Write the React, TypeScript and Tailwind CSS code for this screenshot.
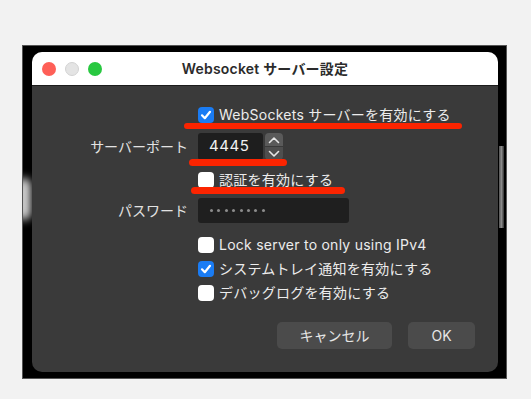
import React from "react";

const Check: React.FC<{ checked?: boolean }> = ({ checked }) => (
  <span
    className={
      "flex h-[16px] w-[16px] shrink-0 items-center justify-center rounded-[4px] " +
      (checked ? "bg-[#1a7cf4]" : "bg-white")
    }
  >
    {checked && (
      <svg width="12" height="12" viewBox="0 0 12 12">
        <path d="M2 6.3 L4.8 9.2 L10 2.8" fill="none" stroke="white" strokeWidth="2.2" strokeLinecap="round" strokeLinejoin="round" />
      </svg>
    )}
  </span>
);

const CheckRow: React.FC<{ checked?: boolean; label: string; className?: string }> = ({ checked, label, className }) => (
  <div className={"col-start-2 flex h-[16px] items-center gap-[5px] " + (className ?? "")}>
    <Check checked={checked} />
    <span className="text-[14px] leading-none tracking-[0.25px] text-[#ececec]">{label}</span>
  </div>
);

const App: React.FC = () => {
  return (
    <div className="min-h-screen w-full bg-[#f2f2f2] pl-[22px] pt-[45px] font-['Inter','Noto_Sans_CJK_JP',sans-serif]">
      <div className="relative h-[334px] w-[485px] overflow-hidden border border-[#555] bg-black pl-[9px] pt-[6px]">
        {/* reflections at the edges */}
        <div className="absolute left-[-6px] top-[132px] h-[42px] w-[14px] rounded-full bg-[#d8d8d8] blur-[4px]" />
        <div className="absolute left-[476px] top-[100px] h-[82px] w-[5px] bg-gradient-to-r from-[#555] via-[#8a8a8a] to-[#333] blur-[0.5px]" />

        <div className="relative flex h-[320px] w-[466px] flex-col overflow-hidden rounded-[10px] bg-[#3a3a3a]">
          {/* title bar */}
          <div className="grid h-[34px] grid-cols-[1fr_auto_1fr] items-center border-b border-[#1c1c1c] bg-white">
            <div className="flex items-center gap-[9px] pl-[10px]">
              <span className="h-[14px] w-[14px] rounded-full bg-[#fe5f57]" />
              <span className="h-[14px] w-[14px] rounded-full border border-[#d2d2d2] bg-[#e4e4e4]" />
              <span className="h-[14px] w-[14px] rounded-full bg-[#28c840]" />
            </div>
            <span className="text-[14px] font-semibold tracking-[0.2px] text-[#2b2b2b]">Websocket サーバー設定</span>
            <div />
          </div>

          {/* body */}
          <div className="relative flex-1 pt-[21px]">
            <div className="grid grid-cols-[156px_1fr] items-center gap-x-[10px] text-[14px] text-[#e2e2e2]">
              <CheckRow checked label="WebSockets サーバーを有効にする" />

              <span className="mt-[10px] text-right">サーバーポート</span>
              <div className="mt-[10px] flex h-[27px] items-stretch gap-[2px]">
                <div className="flex w-[65px] items-center rounded-[3px] bg-[#1e1e1e] pl-[11px] text-[15px] tracking-[0.6px] text-[#f2f2f2]">
                  4445
                </div>
                <div className="flex w-[18px] flex-col gap-[1px]">
                  <div className="flex flex-1 items-center justify-center rounded-t-[4px] bg-[#5a5a5a]">
                    <svg width="12" height="8" viewBox="0 0 12 8">
                      <path d="M1.5 6.5 L6 2 L10.5 6.5" fill="none" stroke="#e6e6e6" strokeWidth="1.6" strokeLinecap="round" strokeLinejoin="round" />
                    </svg>
                  </div>
                  <div className="flex flex-1 items-center justify-center rounded-b-[4px] bg-[#4e4e4e]">
                    <svg width="12" height="8" viewBox="0 0 12 8">
                      <path d="M1.5 1.5 L6 6 L10.5 1.5" fill="none" stroke="#e6e6e6" strokeWidth="1.6" strokeLinecap="round" strokeLinejoin="round" />
                    </svg>
                  </div>
                </div>
              </div>

              <CheckRow label="認証を有効にする" className="mt-[12px]" />

              <span className="mt-[10px] text-right">パスワード</span>
              <div className="mt-[10px] flex h-[25px] w-[151px] items-center gap-[4.4px] rounded-[3px] bg-[#1f1f1f] pl-[12px]">
                {Array.from({ length: 8 }).map((_, i) => (
                  <span key={i} className="h-[3px] w-[3px] rounded-full bg-[#8c8c8c]" />
                ))}
              </div>

              <CheckRow label="Lock server to only using IPv4" className="mt-[14px]" />
              <CheckRow checked label="システムトレイ通知を有効にする" className="mt-[8px]" />
              <CheckRow label="デバッグログを有効にする" className="mt-[8px]" />
            </div>

            <div className="mt-[21px] flex justify-end gap-[16px] pr-[23px]">
              <button className="h-[27px] w-[115px] rounded-[5px] bg-[#4b4b4b] text-[14px] text-[#e6e6e6]">キャンセル</button>
              <button className="h-[27px] w-[67px] rounded-[5px] bg-[#4b4b4b] text-[14px] text-[#e6e6e6]">OK</button>
            </div>

            {/* red annotation underlines */}
            <div className="absolute left-[152px] top-[37px] h-[6px] w-[278px] rounded-full bg-[#fb2400]" />
            <div className="absolute left-[157px] top-[73px] h-[7px] w-[98px] rounded-full bg-[#fb2400]" />
            <div className="absolute left-[159px] top-[101px] h-[7px] w-[154px] rounded-full bg-[#fb2400]" />
          </div>
        </div>
      </div>
    </div>
  );
};

export default App;
